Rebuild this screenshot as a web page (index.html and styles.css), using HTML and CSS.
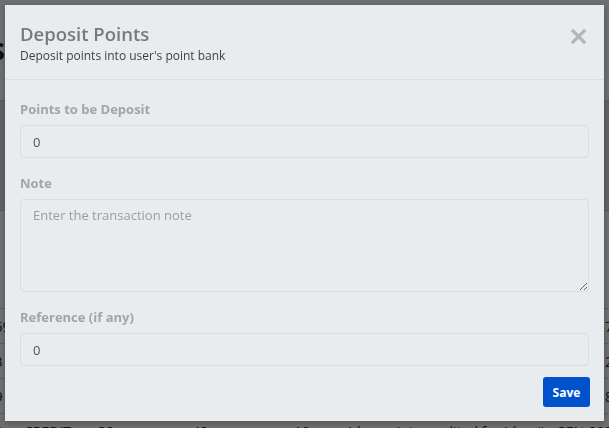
FILE: index.html
```html
<!DOCTYPE html>
<html lang="en">
<head>
  <meta charset="UTF-8">
  <meta name="viewport" content="width=device-width, initial-scale=1.0">
  <title>Deposit Points</title>
  <link rel="stylesheet" href="styles.css">
</head>
<body>
  <div class="page">
    <h1 class="page-title">$</h1>
    <table class="ledger">
      <tr class="row-tall"><td></td><td></td><td></td><td></td><td></td><td></td><td></td></tr>
      <tr class="row-wide"><td>Date</td><td></td><td></td><td></td><td></td><td></td><td></td></tr>
      <tr><td>2021-059</td><td></td><td></td><td></td><td></td><td></td><td>78</td></tr>
      <tr><td>2021-03</td><td></td><td></td><td></td><td></td><td></td><td>22</td></tr>
      <tr><td>2021-09</td><td></td><td></td><td></td><td></td><td></td><td>88</td></tr>
      <tr><td>2021-08</td><td>CREDIT</td><td>30</td><td>40</td><td>10</td><td>Idea points credited for idea # : GEN-2021-2057</td><td></td></tr>
    </table>
  </div>

  <div class="overlay">
    <div class="modal">
      <div class="modal-header">
        <div>
          <h2 class="modal-title">Deposit Points</h2>
          <p class="modal-subtitle">Deposit points into user's point bank</p>
        </div>
        <button class="close-button" aria-label="Close">
          <svg width="15" height="15" viewBox="0 0 15 15" fill="none" stroke="currentColor" stroke-width="3.2" stroke-linecap="square">
            <path d="M2 2L13 13"/>
            <path d="M13 2L2 13"/>
          </svg>
        </button>
      </div>

      <div class="modal-body">
        <div class="form-group">
          <label class="form-label" for="points">Points to be Deposit</label>
          <input class="form-input" id="points" type="text" value="0">
        </div>
        <div class="form-group">
          <label class="form-label" for="note">Note</label>
          <textarea class="form-input form-textarea" id="note" placeholder="Enter the transaction note"></textarea>
        </div>
        <div class="form-group">
          <label class="form-label" for="reference">Reference (if any)</label>
          <input class="form-input" id="reference" type="text" value="0">
        </div>
      </div>

      <div class="modal-footer">
        <button class="save-button">Save</button>
      </div>
    </div>
  </div>
</body>
</html>
```

FILE: styles.css
```css
body {
  font-family: 'Open Sans', 'Noto Sans', sans-serif;
  background-color: #ffffff;
  color: #212529;
  margin: 0;
  overflow: hidden;
}

/* page behind the dialog */
.page {
  padding: 34px 0 0;
}

.page-title {
  font-size: 26px;
  font-weight: 700;
  margin: 0 0 0 -10px;
  line-height: 36px;
  height: 66px;
}

.ledger {
  border-collapse: collapse;
  table-layout: fixed;
  width: 709px;
  margin-left: -62px;
  font-size: 14px;
  white-space: nowrap;
}

.ledger td {
  border-top: 1px solid #cfcfcf;
  height: 34px;
  padding: 0 12px;
  vertical-align: middle;
}

.ledger td:nth-child(1) { width: 50px; }
.ledger td:nth-child(2) { width: 50px; }
.ledger td:nth-child(3) { width: 70px; }
.ledger td:nth-child(4) { width: 78px; }
.ledger td:nth-child(5) { width: 30px; }
.ledger td:nth-child(6) { width: 233px; }
.ledger td:nth-child(7) { width: 30px; }

.ledger .row-tall td {
  height: 109px;
  background-color: #e4e4e4;
}

.ledger .row-wide td {
  height: 97px;
  color: #444;
}

/* dialog */
.overlay {
  position: fixed;
  inset: 0;
  background-color: rgba(0, 0, 0, 0.57);
  padding: 5px;
}

.modal {
  background-color: #e9ecef;
  width: 599px;
  box-shadow: 0 2px 6px rgba(0, 0, 0, 0.25);
}

.modal-header {
  display: flex;
  justify-content: space-between;
  align-items: flex-start;
  padding: 16px 15px 14px;
  border-bottom: 1px solid #dcdfe2;
}

.modal-title {
  font-size: 18.5px;
  font-weight: 600;
  color: #777a7d;
  margin: 0;
  line-height: 25px;
}

.modal-subtitle {
  font-size: 12px;
  color: #3d3f41;
  margin: 0;
  line-height: 19px;
}

.close-button {
  background: none;
  border: none;
  color: #b3b5b8;
  padding: 0;
  margin: 8px 3px 0 0;
  cursor: pointer;
  display: flex;
}

.modal-body {
  padding: 19px 15px 0;
}

.form-group {
  margin-bottom: 15px;
}

.form-group:last-child {
  margin-bottom: 0;
}

.form-label {
  display: block;
  font-size: 13px;
  font-weight: 700;
  color: #a2a5a8;
  line-height: 21px;
  margin-bottom: 5px;
}

.form-input {
  display: block;
  box-sizing: border-box;
  width: 100%;
  height: 33px;
  padding: 6px 12px;
  font-family: inherit;
  font-size: 13px;
  line-height: 19px;
  color: #505356;
  background-color: #e9ecef;
  border: 1px solid #d9dce0;
  border-radius: 4px;
  outline: none;
}

.form-textarea {
  height: 93px;
  resize: vertical;
}

.form-input::placeholder {
  color: #9a9da1;
}

.modal-footer {
  display: flex;
  justify-content: flex-end;
  padding: 11px 14px 14px;
}

.save-button {
  background-color: #0052cc;
  color: white;
  border: none;
  border-radius: 3px;
  font-family: inherit;
  font-size: 12px;
  font-weight: 700;
  width: 47px;
  height: 30px;
  padding: 0;
  cursor: pointer;
}
```
